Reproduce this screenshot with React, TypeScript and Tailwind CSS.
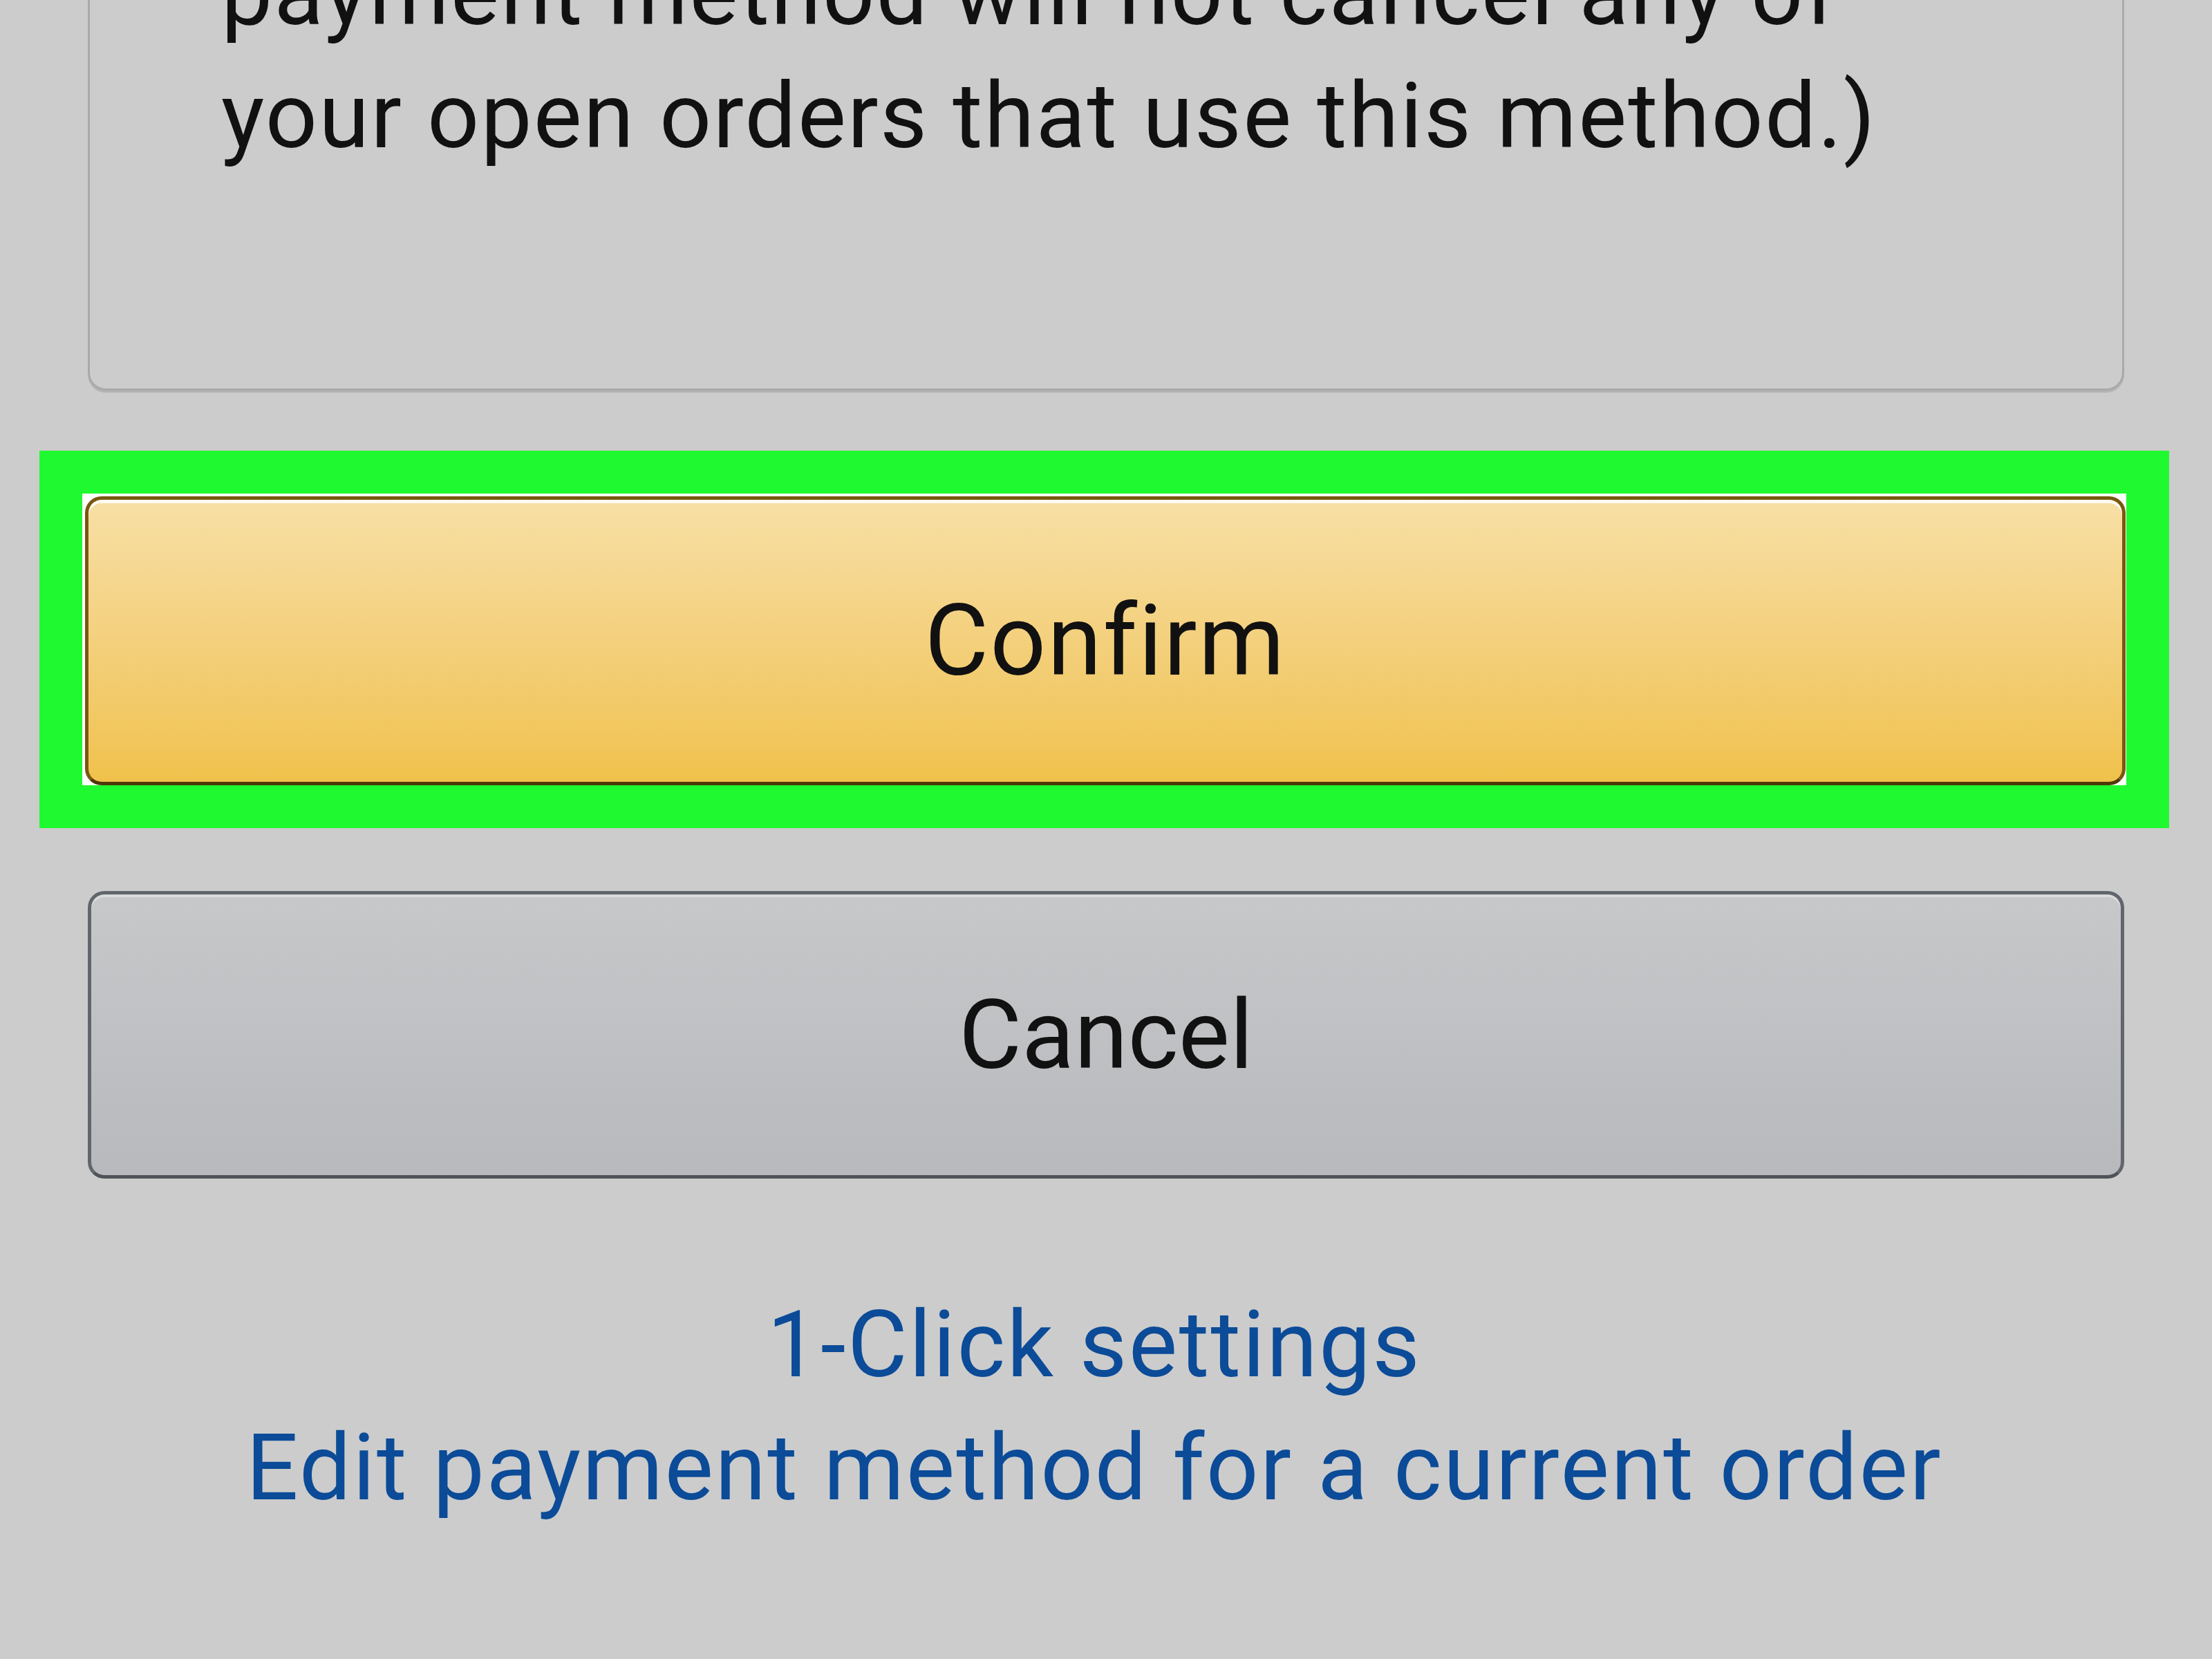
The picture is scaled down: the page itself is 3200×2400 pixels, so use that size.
export default function App() {
  return (
    <div
      className="w-[3200px] h-[2400px] overflow-hidden bg-[#cccccc] flex flex-col"
      style={{ fontFamily: 'Roboto, "Open Sans", sans-serif' }}
    >
      {/* notice box, top is scrolled off */}
      <div className="mx-[127px] mt-[-102px] border-[3px] border-[#a9a9a9] rounded-b-[26px] shadow-[0_3px_0_#b3b3b3] pl-[190px] pb-[305px] text-[132px] leading-[178px] tracking-[2.2px] text-[#111]">
        <p>payment method will not cancel any of</p>
        <p>your open orders that use this method.)</p>
      </div>

      {/* highlighted confirm */}
      <div className="ml-[57px] w-[3081px] mt-[87px] bg-[#1ff92f] p-[62px]">
        <div className="bg-white pt-[4px] pl-[4px] pr-[1px]">
          <button className="w-full h-[418px] rounded-[24px] border-[5px] border-[#7a5810] border-b-[#4f3808] bg-linear-to-b from-[#f7dfa5] to-[#f0c14b] shadow-[inset_0_5px_0_rgba(255,255,255,0.85)] text-[142px] tracking-[2px] text-[#111] flex items-center justify-center">
            Confirm
          </button>
        </div>
      </div>

      <button className="mx-[127px] mt-[91px] h-[416px] rounded-[24px] border-[5px] border-[#61666d] border-b-[#4e5359] bg-linear-to-b from-[#c7c8ca] to-[#b8b9bc] shadow-[inset_0_4px_0_rgba(255,255,255,0.35)] text-[140px] text-[#111] flex items-center justify-center">
        Cancel
      </button>

      <div className="mt-[152px] flex flex-col items-center text-[133px] leading-[178px] tracking-[2.4px] text-[#0b4b98] pr-[34px]">
        <a>1-Click settings</a>
        <a>Edit payment method for a current order</a>
      </div>
    </div>
  )
}
